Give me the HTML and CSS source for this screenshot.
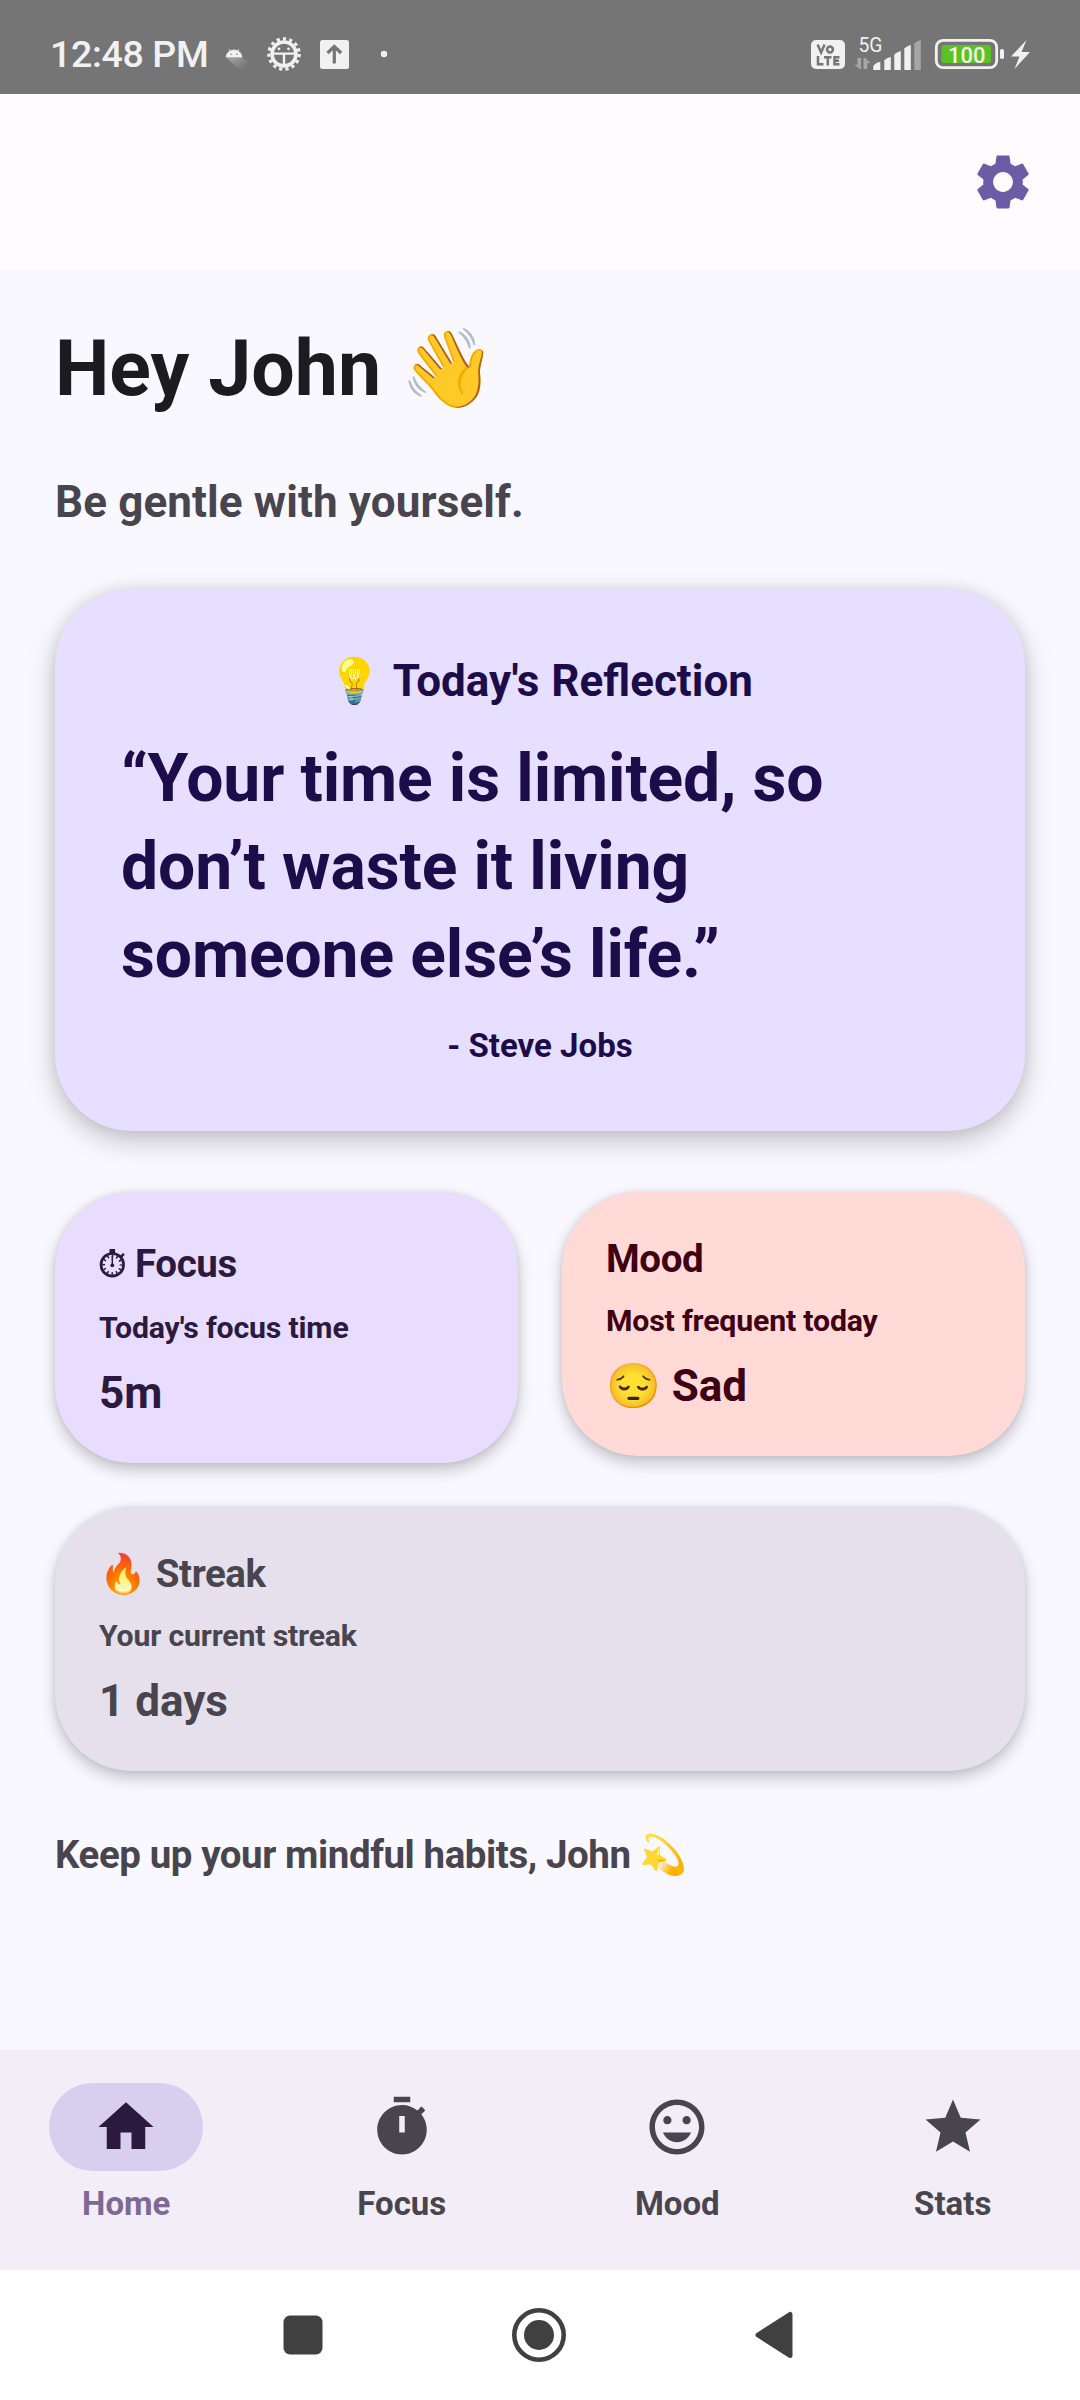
FILE: index.html
```html
<!DOCTYPE html>
<html lang="en">
<head>
<meta charset="utf-8">
<title>Home</title>
<link rel="stylesheet" href="styles.css">
</head>
<body>
<div class="screen">
  <div class="status-bar">
    <span class="clock">12:48 PM</span>
    <svg class="notif-icons" width="170" height="40" viewBox="220 34 170 40">
      <defs>
        <linearGradient id="cast" gradientUnits="userSpaceOnUse" x1="235" y1="56" x2="244" y2="68">
          <stop offset="0" stop-color="#fff" stop-opacity=".3"/>
          <stop offset="1" stop-color="#fff" stop-opacity="0"/>
        </linearGradient>
      </defs>
      <path d="M226.200 57.500L241.800 57L249 63L241 71Z" fill="url(#cast)"/>
      <path d="M226.200 57a7.800 7 0 0 1 15.600 0zM229 49l1.700 3M239 49l-1.700 3" fill="#f1f1f1" stroke="#f1f1f1" stroke-width=".8"/>
      <circle cx="231" cy="54.300" r=".7" fill="#757575"/><circle cx="237" cy="54.300" r=".7" fill="#757575"/>
      <g fill="none" stroke="#f1f1f1">
        <circle cx="284" cy="54" r="12" stroke-width="3.6"/>
        <circle cx="284" cy="54" r="15.2" stroke-width="3.2" stroke-dasharray="3.2 3.167"/>
        <path d="M273 53.6h22M284 54v12" stroke-width="2.4"/>
      </g>
      <circle cx="279" cy="48.8" r="1.4" fill="#f1f1f1"/><circle cx="288.500" cy="48.8" r="1.4" fill="#f1f1f1"/>
      <rect x="320" y="40" width="29" height="29" rx="2.500" fill="#f1f1f1"/>
      <path d="M334.300 63.500V47M327.500 53l6.800-6.500l6.800 6.500" fill="none" stroke="#757575" stroke-width="3.200"/>
      <circle cx="384" cy="54" r="3.200" fill="#f1f1f1"/>
    </svg>
    <svg class="system-icons" width="224" height="40" viewBox="808 34 224 40">
      <rect x="811" y="40" width="34" height="29" rx="5" fill="#f1f1f1"/>
      <g fill="none" stroke="#757575" stroke-width="2.500">
        <path d="M817.600 44.500l3.500 8l3.500-8M818 56v8.300h5.500M824 57.200h7.500M827.800 57v8.500M839.500 57.200h-5v7.100h5M834.500 60.800h4.500"/>
        <circle cx="830" cy="49.500" r="2.900"/>
      </g>
      <text x="858.500" y="51.800" class="net" textLength="24" lengthAdjust="spacingAndGlyphs">5G</text>
      <path d="M857.500 58h3.500v11h-1.500l-5-4.500h3zM863.500 69v-11h2l5 5h-3.200v6z" fill="#a6a6a6"/>
      <path d="M873.300 66q3-3.800 7-4v8h-7zM884.300 60.300q3-3 6.500-3.300v13h-6.500zM894.300 54.500q3-3 6.500-3.500v19h-6.500zM904.300 48.500q3-3 6.500-3.500v25h-6.500z" fill="#f1f1f1"/>
      <path d="M914.300 43.500q3-3 6.500-3.500v30h-6.500z" fill="#a6a6a6"/>
      <rect x="936.300" y="40.300" width="60.400" height="27.400" rx="7" fill="none" stroke="#f1f1f1" stroke-width="2.800"/>
      <rect x="941.500" y="45" width="49.500" height="18" rx="3" fill="#58c322"/>
      <text x="966.700" y="62.500" class="charge" text-anchor="middle">100</text>
      <rect x="1000" y="49" width="4" height="10" rx="1.800" fill="#f1f1f1"/>
      <path d="M1026.500 40L1011 56.500h8.500L1014.500 69L1030 52h-8.500z" fill="#f1f1f1"/>
    </svg>
  </div>

  <header class="app-bar">
    <svg class="icon settings" viewBox="0 0 24 24"><path d="M19.14,12.94c0.04-0.3,0.06-0.61,0.06-0.94c0-0.32-0.02-0.64-0.07-0.94l2.03-1.58c0.18-0.14,0.23-0.41,0.12-0.61l-1.92-3.32c-0.12-0.22-0.37-0.29-0.59-0.22l-2.39,0.96c-0.5-0.38-1.03-0.7-1.62-0.94L14.4,2.81c-0.04-0.24-0.24-0.41-0.48-0.41h-3.84c-0.24,0-0.43,0.17-0.47,0.41L9.25,5.35C8.66,5.59,8.12,5.92,7.63,6.29L5.24,5.33c-0.22-0.08-0.47,0-0.59,0.22L2.74,8.87C2.62,9.08,2.66,9.34,2.86,9.48l2.03,1.58C4.84,11.36,4.8,11.69,4.8,12s0.02,0.64,0.07,0.94l-2.03,1.58c-0.18,0.14-0.23,0.41-0.12,0.61l1.92,3.32c0.12,0.22,0.37,0.29,0.59,0.22l2.39-0.96c0.5,0.38,1.03,0.7,1.62,0.94l0.36,2.54c0.05,0.24,0.24,0.41,0.48,0.41h3.84c0.24,0,0.44-0.17,0.47-0.41l0.36-2.54c0.59-0.24,1.13-0.56,1.62-0.94l2.39,0.96c0.22,0.08,0.47,0,0.59-0.22l1.92-3.32c0.12-0.22,0.07-0.47-0.12-0.61L19.14,12.94zM12,15.6c-1.98,0-3.6-1.62-3.6-3.6s1.62-3.6,3.6-3.6s3.6,1.62,3.6,3.6S13.98,15.6,12,15.6z"/></svg>
  </header>

  <main class="content">
    <h1 class="greeting">Hey John 👋</h1>
    <p class="subtitle">Be gentle with yourself.</p>

    <section class="card quote-card">
      <h2 class="quote-label">💡 Today's Reflection</h2>
      <blockquote class="quote">“Your time is limited, so don’t waste it living someone else’s life.”</blockquote>
      <p class="author">- Steve Jobs</p>
    </section>

    <div class="stats">
      <div class="stat-row">
        <section class="card stat focus">
          <h3 class="stat-title with-icon">
            <svg class="stopwatch" width="27" height="30" viewBox="0 0 27 30">
              <circle cx="13.300" cy="16.800" r="11.300" fill="none" stroke="currentColor" stroke-width="2.700"/>
              <circle cx="13.300" cy="16.800" r="8.700" fill="none" stroke="currentColor" stroke-width="2.800" stroke-dasharray="1.500 3.055" stroke-dashoffset=".75"/>
              <path d="M10.500 1h5.600v5h-5.600zM21 8l3-3l1.800 1.600l-2.500 3z" fill="currentColor"/>
              <path d="M13.300 8v9" stroke="currentColor" stroke-width="1.500"/>
              <circle cx="13.300" cy="17.300" r="1.900" fill="currentColor"/>
            </svg>Focus</h3>
          <p class="stat-caption">Today's focus time</p>
          <p class="stat-value">5m</p>
        </section>
        <section class="card stat mood">
          <h3 class="stat-title">Mood</h3>
          <p class="stat-caption">Most frequent today</p>
          <p class="stat-value">😔 Sad</p>
        </section>
      </div>
      <section class="card stat streak">
        <h3 class="stat-title">🔥 Streak</h3>
        <p class="stat-caption">Your current streak</p>
        <p class="stat-value">1 days</p>
      </section>
    </div>

    <p class="footer-note">Keep up your mindful habits, John 💫</p>
  </main>

  <nav class="tabs">
    <a class="tab active">
      <span class="pill"><svg class="icon" viewBox="0 0 24 24"><path d="M10,20v-6h4v6h5v-8h3L12,3 2,12h3v8z"/></svg></span>
      <span class="tab-label">Home</span>
    </a>
    <a class="tab">
      <span class="pill"><svg class="icon" viewBox="0 0 24 24"><path d="M9,1h6v2H9zM19.030,7.390l1.420,-1.420c-0.430,-0.510 -0.900,-0.990 -1.410,-1.410l-1.420,1.420C16.070,4.740 14.120,4 12,4c-4.970,0 -9,4.030 -9,9s4.020,9 9,9 9,-4.030 9,-9c0,-2.120 -0.740,-4.070 -1.970,-5.610zM13,14h-2V8h2v6z"/></svg></span>
      <span class="tab-label">Focus</span>
    </a>
    <a class="tab">
      <span class="pill"><svg class="icon" viewBox="0 0 24 24"><path d="M11.990,2C6.470,2 2,6.480 2,12s4.470,10 9.990,10C17.520,22 22,17.520 22,12S17.520,2 11.990,2zM12,20c-4.420,0 -8,-3.580 -8,-8s3.580,-8 8,-8 8,3.580 8,8 -3.580,8 -8,8zM15.500,11c0.830,0 1.500,-0.670 1.500,-1.500S16.330,8 15.500,8 14,8.670 14,9.500s0.670,1.500 1.500,1.500zM8.500,11c0.830,0 1.500,-0.670 1.500,-1.500S9.330,8 8.500,8 7,8.670 7,9.500 7.670,11 8.500,11zM12,17.500c2.330,0 4.310,-1.460 5.110,-3.500H6.890c0.800,2.040 2.780,3.500 5.110,3.500z"/></svg></span>
      <span class="tab-label">Mood</span>
    </a>
    <a class="tab">
      <span class="pill"><svg class="icon" viewBox="0 0 24 24"><path d="M12,17.270L18.180,21l-1.640,-7.030L22,9.240l-7.190,-0.610L12,2 9.190,8.630 2,9.240l5.460,4.730L5.820,21z"/></svg></span>
      <span class="tab-label">Stats</span>
    </a>
  </nav>

  <div class="system-nav">
    <svg width="56" height="56" viewBox="0 0 56 56"><rect x="8.500" y="8.500" width="39" height="39" rx="6.500"/></svg>
    <svg width="56" height="56" viewBox="0 0 56 56"><circle cx="28" cy="28" r="24.700" fill="none" stroke="#404040" stroke-width="4.600"/><circle cx="28" cy="28" r="15"/></svg>
    <svg width="56" height="56" viewBox="0 0 56 56"><path d="M11 28L43 7.500V48.500Z" stroke="#404040" stroke-width="5" stroke-linejoin="round"/></svg>
  </div>
</div>
</body>
</html>
```
FILE: styles.css
```css
* {
  box-sizing: border-box;
  margin: 0;
  padding: 0;
}

body {
  width: 1080px;
  background: #fff;
  font-family: Roboto, "Noto Color Emoji", sans-serif;
}

.screen {
  display: flex;
  flex-direction: column;
  width: 1080px;
  height: 2400px;
  background: #f9f8ff;
}

.status-bar {
  display: flex;
  align-items: center;
  height: 94px;
  padding: 14px 48px 0 50px;
  background: #757575;
  color: #f1f1f1;
}

.clock {
  width: 170px;
  font-size: 37.5px;
  font-weight: 500;
  line-height: 44px;
  letter-spacing: -0.35px;
  white-space: nowrap;
}

.system-icons {
  margin-left: auto;
}

.net {
  fill: #f1f1f1;
  font-size: 20px;
}

.charge {
  fill: #f1f1f1;
  font-size: 22px;
  font-weight: 500;
}

.app-bar {
  display: flex;
  align-items: center;
  justify-content: flex-end;
  height: 176px;
  padding-right: 44px;
  background: #fffbff;
}

.icon {
  display: block;
  width: 66px;
  height: 66px;
  fill: currentColor;
}

.settings {
  color: #6c5ca5;
}

.content {
  display: flex;
  flex: 1;
  flex-direction: column;
  gap: 61px;
  padding: 55px 55px 0;
  color: #48454e;
  font-weight: 700;
}

.greeting {
  height: 90px;
  color: #1c1b1f;
  font-size: 77px;
  font-weight: 700;
  line-height: 89px;
}

.subtitle {
  height: 52px;
  font-size: 44px;
  line-height: 52px;
  letter-spacing: 0.12px;
}

.card {
  border-radius: 77px;
}

.quote-card {
  display: flex;
  flex-direction: column;
  gap: 28px;
  height: 542px;
  padding: 66px;
  background: #e7dfff;
  color: #1c0d4a;
  box-shadow: 0 0 14px rgba(0, 0, 0, 0.08), 0 10px 28px rgba(0, 0, 0, 0.22);
}

.quote-label {
  height: 52px;
  font-size: 44px;
  line-height: 52px;
  text-align: center;
  word-spacing: 1px;
}

.quote {
  font-size: 66px;
  line-height: 88px;
  letter-spacing: -0.12px;
}

.author {
  font-size: 33px;
  line-height: 38px;
  text-align: center;
}

.stats {
  display: flex;
  flex-direction: column;
  gap: 44px;
}

.stat-row {
  display: grid;
  grid-template-columns: 1fr 1fr;
  gap: 44px;
  align-items: start;
}

.stat {
  display: flex;
  flex-direction: column;
  gap: 22px;
  padding: 44px;
  box-shadow: 0 0 6px rgba(0, 0, 0, 0.08), 0 7px 16px rgba(0, 0, 0, 0.22);
}

.focus {
  background: #e8ddff;
  color: #2b1a3d;
}

.mood {
  background: #ffdad7;
  color: #3f0013;
}

.streak {
  background: #e5e0eb;
}

.stat-title {
  height: 45px;
  font-size: 38.5px;
  line-height: 45px;
  letter-spacing: -0.4px;
}

.with-icon {
  display: flex;
  align-items: center;
  gap: 9px;
  height: 52px;
  padding-top: 3px;
}

.stopwatch {
  margin-bottom: 1px;
}

.stat-caption {
  height: 35.5px;
  font-size: 30.25px;
  line-height: 35.5px;
  letter-spacing: -0.18px;
}

.stat-value {
  height: 51.5px;
  font-size: 44px;
  line-height: 51.5px;
}

.footer-note {
  height: 45px;
  font-size: 38.5px;
  line-height: 45px;
  letter-spacing: -0.43px;
}

.tabs {
  display: grid;
  grid-template-columns: repeat(4, 1fr);
  gap: 23px;
  height: 220px;
  padding: 33px 1px 0 0;
  background: #f3edf8;
  color: #48454e;
}

.tab {
  display: flex;
  flex-direction: column;
  align-items: center;
  gap: 11px;
}

.pill {
  display: flex;
  align-items: center;
  justify-content: center;
  width: 154px;
  height: 88px;
  border-radius: 44px;
}

.active .pill {
  background: #d8cfee;
  color: #2b1a3d;
}

.active .tab-label {
  color: #7d6994;
}

.tab-label {
  font-size: 33px;
  font-weight: 700;
  line-height: 44px;
}

.system-nav {
  display: flex;
  align-items: center;
  justify-content: center;
  gap: 180px;
  height: 130px;
  padding-right: 2px;
  background: #fff;
  fill: #404040;
}
```
